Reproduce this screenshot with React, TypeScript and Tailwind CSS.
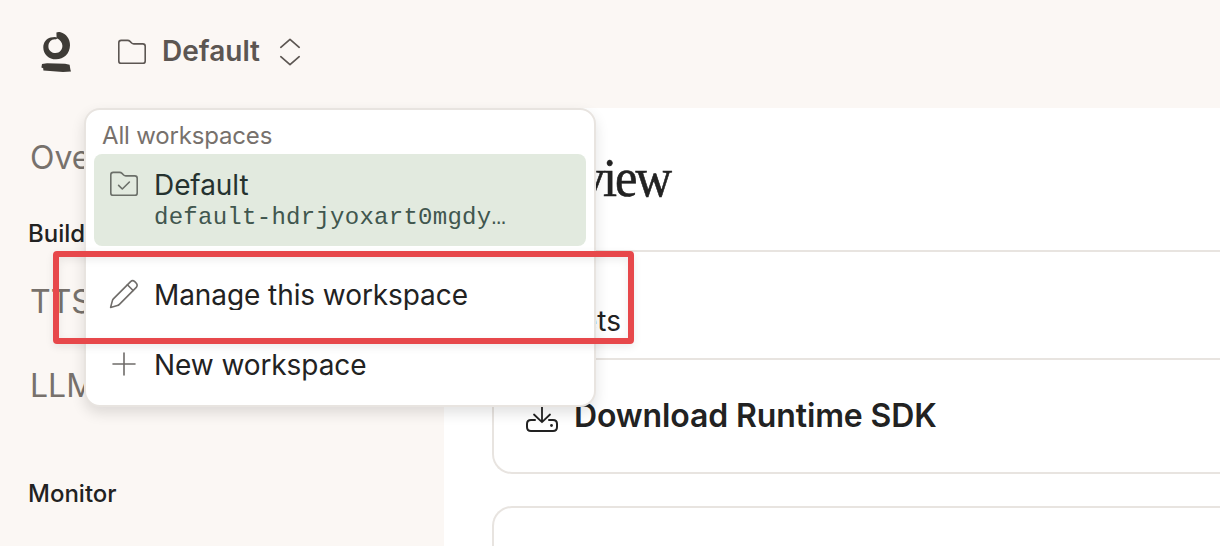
import React from 'react';

const Logo: React.FC = () => (
    <svg width="32" height="42" viewBox="0 0 32 42" className="absolute left-[41px] top-[31px]">
        <path
            fillRule="evenodd"
            d="M15.4 1.6 C16.4 .9 18 .9 19.6 1.2 C25 2.4 29.2 8 29 14.2 C28.8 22.6 22.8 28.2 15.2 28.3 C8 28.4 2.3 23.2 2.3 16.4 C2.3 11.2 5.4 7.4 9.6 6.4 L14 6 L15.6 6.6 Z M14.6 8.4 C10.4 8 7.4 11.4 7.4 15.4 C7.4 19.4 10.6 22 14.6 22 C18.8 22 21.4 18.8 21.4 14.8 C21.4 11.4 19 8.8 16.4 7.4 Z"
            fill="#3e3b36"
        />
        <path d="M1 33 L6 32.2 L24 32.8 L28.6 33.8 L29.4 38.4 L30 40.6 L22 41 L9 40 L2.4 39.6 L2.2 37.2 L.4 36.4 Z" fill="#3e3b36" />
    </svg>
);

const FolderIcon: React.FC<{ checked?: boolean; color: string }> = ({ checked, color }) => (
    <svg width="30" height="28" viewBox="0 0 30 28" fill="none" stroke={color} strokeWidth="1.6" strokeLinejoin="round" strokeLinecap="round" className="shrink-0">
        <path d="M1.8 4.8 Q1.8 2.4 4.2 2.4 H10.6 Q12 2.4 13 3.4 L14.6 5 Q15.5 5.9 16.8 5.9 H25.8 Q28.2 5.9 28.2 8.3 V22.9 Q28.2 25.3 25.8 25.3 H4.2 Q1.8 25.3 1.8 22.9 Z" />
        {checked && <path d="M9.6 15.4 L13.3 19 L20.4 12" />}
    </svg>
);

const PencilIcon: React.FC = () => (
    <svg width="30" height="30" viewBox="0 0 30 30" fill="none" stroke="#6f6c69" strokeWidth="1.6" strokeLinejoin="round" strokeLinecap="round" className="shrink-0">
        <path d="M1.6 28.4 L3.4 21.6 Q3.7 20.5 4.6 19.6 L21.6 2.6 Q23.6 .8 25.8 2.6 L27.3 4.2 Q29 6.4 27.3 8.4 L10.4 25.4 Q9.5 26.3 8.4 26.6 Z" />
        <path d="M18.4 5.8 L24.1 11.5" />
    </svg>
);

const PlusIcon: React.FC = () => (
    <svg width="30" height="30" viewBox="0 0 30 30" stroke="#6f6c69" strokeWidth="1.6" strokeLinecap="round" className="shrink-0">
        <path d="M15 4 V26 M4 15 H26" />
    </svg>
);

const DownloadIcon: React.FC = () => (
    <svg width="32" height="32" viewBox="0 0 32 32" fill="none" stroke="#222" strokeWidth="2" strokeLinecap="round" strokeLinejoin="round" className="shrink-0">
        <path d="M16 2 V22 M8 14.5 L16 22.2 L24 14.5" strokeWidth="1.8" />
        <path d="M9 20 H5 Q1 20 1 24 V27 Q1 31 5 31 H27 Q31 31 31 27 V24 Q31 20 27 20 H23" />
        <circle cx="25.5" cy="25.5" r="1.4" fill="#222" stroke="none" />
    </svg>
);

const WorkspaceMenu: React.FC = () => (
    <div className="absolute left-[84px] top-[108px] w-[512px] h-[299px] bg-white border-2 border-[#e8e4e0] rounded-[16px] shadow-[0_6px_14px_rgba(0,0,0,0.12)] px-2">
        <p className="h-[44px] pl-2 pt-[6px] text-[24px] leading-[40px] tracking-[-0.17px] text-[#77716c]">All workspaces</p>
        <div className="h-[92px] rounded-[8px] bg-[#e2eadf] flex pl-[15px] pt-[16px] gap-[15px]">
            <FolderIcon checked color="#6b6f69" />
            <div>
                <p className="text-[28px] leading-[30px] tracking-[-0.08px] text-[#25322f]">Default</p>
                <p className="mt-[2px] font-['Liberation_Mono'] text-[24px] leading-[32px] tracking-[0.27px] text-[#40564e]">default-hdrjyoxart0mgdy…</p>
            </div>
        </div>
        <div className="mt-[33px] h-[31px] flex items-start pl-[15px] gap-[15px]">
            <PencilIcon />
            <p className="mt-px h-[30px] overflow-hidden text-[28px] leading-[30px] tracking-[-0.08px] text-[#222]">Manage this workspace</p>
        </div>
        <div className="mt-[39px] h-[30px] flex items-start pl-[15px] gap-[15px]">
            <PlusIcon />
            <p className="mt-px text-[28px] leading-[30px] tracking-[-0.08px] text-[#222]">New workspace</p>
        </div>
    </div>
);

export default function App() {
    return (
        <div className="relative w-[1220px] h-[546px] overflow-hidden bg-[#fbf7f4] font-['Inter',sans-serif] flex flex-col">
            <header className="relative h-[108px] shrink-0 flex items-start pl-[117px] pt-[36px]">
                <Logo />
                <div className="h-[30px] flex items-center">
                    <div className="pt-[2px]"><FolderIcon color="#5c5652" /></div>
                    <span className="ml-[15px] text-[28px] leading-[30px] font-semibold text-[#5c5652]">Default</span>
                    <svg width="22" height="28" viewBox="0 0 22 28" fill="none" stroke="#5c5652" strokeWidth="1.7" strokeLinecap="round" strokeLinejoin="round" className="ml-[19px] mt-[2px]">
                        <path d="M1.8 9.3 L11 1.3 L20.2 9.3 M1.8 18.7 L11 26.7 L20.2 18.7" />
                    </svg>
                </div>
            </header>

            <div className="flex flex-1 min-h-0">
                <nav className="w-[444px] shrink-0 pl-[30px] flex flex-col text-[32px] leading-[40px] text-[#77716c]">
                    <span className="mt-[30px]">Overview</span>
                    <span className="mt-[36px] -ml-[2px] text-[24px] font-medium text-[#222]">Build</span>
                    <span className="mt-[28px]">TTS</span>
                    <span className="mt-[44px]">LLM</span>
                    <span className="mt-[68px] -ml-[2px] text-[24px] font-medium text-[#222]">Monitor</span>
                </nav>
                <main className="flex-1 min-w-0 bg-white pl-12">
                    <div className="-ml-12 pl-12 h-[144px] border-b-2 border-[#e8e4e0] pt-[38px]">
                        <h1 className="w-[178px] origin-right scale-x-[0.92] flex justify-end font-['Liberation_Serif'] text-[55px] leading-[64px] tracking-[-2.2px] [-webkit-text-stroke:0.6px_#222] text-[#222]">Overview</h1>
                    </div>
                    <div className="h-[106px] pt-[49px] w-[129px] flex justify-end text-[28px] leading-[40px] text-[#222]">Assets</div>
                    <section className="h-[116px] border-2 border-r-0 border-[#e8e4e0] rounded-l-[20px] flex items-center pl-8 gap-4">
                        <DownloadIcon />
                        <span className="text-[32px] leading-[40px] font-semibold tracking-[-0.12px] text-[#222]">Download Runtime SDK</span>
                    </section>
                    <section className="mt-8 h-[116px] border-2 border-r-0 border-[#e8e4e0] rounded-l-[20px]" />
                </main>
            </div>

            <WorkspaceMenu />
            <div className="absolute left-[53px] top-[251px] w-[581px] h-[93px] border-6 border-[#e7484b] rounded-[4px] shadow-[0_3px_8px_rgba(0,0,0,0.08),inset_0_3px_8px_rgba(0,0,0,0.07)]" />
        </div>
    );
}
